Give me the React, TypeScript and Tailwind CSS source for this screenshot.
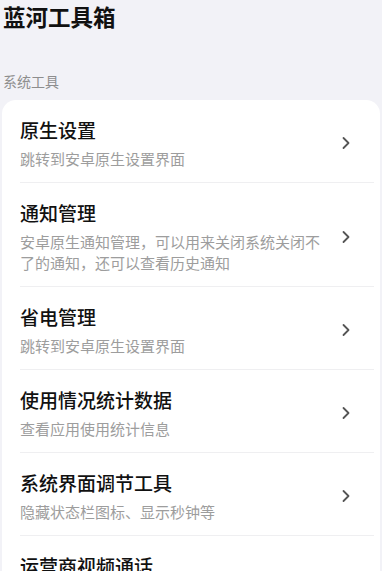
import React from 'react';

interface Tool {
  title: string;
  desc: string;
}

const tools: Tool[] = [
  { title: '原生设置', desc: '跳转到安卓原生设置界面' },
  { title: '通知管理', desc: '安卓原生通知管理，可以用来关闭系统关闭不了的通知，还可以查看历史通知' },
  { title: '省电管理', desc: '跳转到安卓原生设置界面' },
  { title: '使用情况统计数据', desc: '查看应用使用统计信息' },
  { title: '系统界面调节工具', desc: '隐藏状态栏图标、显示秒钟等' },
  { title: '运营商视频通话', desc: '开启运营商视频通话功能' },
];

const Chevron = () => (
  <svg className="w-[10px] h-[14px] text-[#555]" viewBox="0 0 10 14" fill="none" stroke="currentColor">
    <path d="M2.5 2l5 5-5 5" strokeWidth={1.8} strokeLinecap="round" strokeLinejoin="round" />
  </svg>
);

const ToolRow: React.FC<{ tool: Tool; last: boolean }> = ({ tool, last }) => (
  <div>
    <div className="flex items-center pl-[18px] pr-[29px] pt-[17px] pb-[13px]">
      <div className="flex-1 pr-[20px]">
        <div className="text-[19px] leading-[26px] font-medium text-[#111]">{tool.title}</div>
        <div className="mt-[5px] text-[15px] leading-[21px] text-[#9d9d9d]">{tool.desc}</div>
      </div>
      <Chevron />
    </div>
    {!last && <div className="ml-[18px] mr-[6px] h-px bg-[#efeff1]" />}
  </div>
);

export default function App() {
  return (
    <div
      className="min-h-screen bg-[#f2f2f7] px-[2px] pt-[1px]"
      style={{ fontFamily: '"Noto Sans CJK SC", "Noto Sans", sans-serif' }}
    >
      <h1 className="pl-[1px] text-[22.5px] leading-[30px] font-bold text-[#111]">蓝河工具箱</h1>
      <div className="mt-[40px] pl-[1px] text-[14px] leading-[20px] text-[#8e8e8e]">系统工具</div>
      <div className="mt-[9px] bg-white rounded-[14px] overflow-hidden">
        {tools.map((t, i) => (
          <ToolRow key={t.title} tool={t} last={i === tools.length - 1} />
        ))}
      </div>
    </div>
  );
}
